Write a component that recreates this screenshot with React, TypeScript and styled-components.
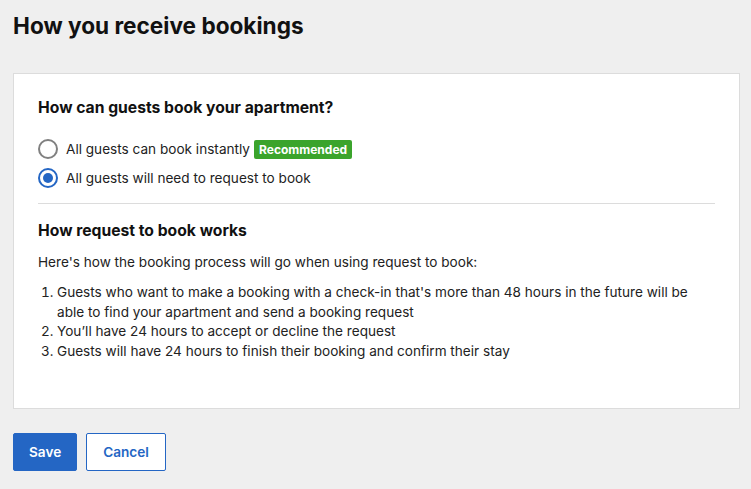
import styled, { createGlobalStyle } from "styled-components";

const GlobalStyle = createGlobalStyle`
  body {
    margin: 0;
    background-color: #efefef;
    font-family: Inter, "Liberation Sans", Arial, sans-serif;
    color: #1a1a1a;
  }
`;

const Page = styled.main`
  padding: 12px 11px 0 13px;
`;
const Title = styled.h1`
  margin: 0 0 33px;
  font-size: 22.6px;
  line-height: 28px;
  font-weight: 700;
  color: #111;
`;
const Card = styled.section`
  background-color: #fff;
  border: 1px solid #dcdcdc;
  padding: 24px 24px 46px;
`;
const Heading = styled.h2`
  margin: 0;
  font-size: 15.7px;
  line-height: 20px;
  font-weight: 700;
  color: #111;
`;
const Options = styled.div`
  display: flex;
  flex-direction: column;
  gap: 9px;
  margin-top: 21px;
  padding-bottom: 15px;
  border-bottom: 1px solid #dcdcdc;
`;
const Option = styled.label`
  display: flex;
  align-items: center;
  gap: 8px;
  height: 20px;
  font-size: 13.6px;
  color: #222;
`;
const Radio = styled.span<{ $checked?: boolean }>`
  box-sizing: border-box;
  width: 20px;
  height: 20px;
  border-radius: 50%;
  border: 2px solid ${(p) => (p.$checked ? "#2466c4" : "#808080")};
  display: flex;
  align-items: center;
  justify-content: center;

  &::after {
    content: "";
    display: ${(p) => (p.$checked ? "block" : "none")};
    width: 10px;
    height: 10px;
    border-radius: 50%;
    background-color: #2466c4;
  }
`;
const Badge = styled.span`
  margin-left: -4px;
  padding: 2px 5px;
  border-radius: 2px;
  background-color: #3ba42c;
  color: #fff;
  font-size: 12px;
  line-height: 15px;
  font-weight: 700;
`;
const Details = styled.div`
  padding-top: 17px;

  p {
    margin: 11px 0 0;
    font-size: 13.6px;
    line-height: 20px;
    color: #222;
  }
`;
const Steps = styled.ol`
  margin: 11px 0 0;
  padding-left: 19px;
  font-size: 13.6px;
  line-height: 19.7px;
  color: #222;
`;
const Actions = styled.div`
  display: flex;
  gap: 9px;
  margin-top: 24px;
`;
const Button = styled.button<{ $primary?: boolean }>`
  height: 38px;
  padding: 0 ${(p) => (p.$primary ? "15px" : "16px")};
  border-radius: 2px;
  border: 1px solid #2466c4;
  background-color: ${(p) => (p.$primary ? "#2466c4" : "#fff")};
  color: ${(p) => (p.$primary ? "#fff" : "#2466c4")};
  font-family: inherit;
  font-size: 13.6px;
  font-weight: 600;
  cursor: pointer;
`;

const steps = [
  "Guests who want to make a booking with a check-in that's more than 48 hours in the future will be able to find your apartment and send a booking request",
  "You’ll have 24 hours to accept or decline the request",
  "Guests will have 24 hours to finish their booking and confirm their stay",
];

const App = () => {
  return (
    <Page>
      <GlobalStyle />
      <Title>How you receive bookings</Title>
      <Card>
        <Heading>How can guests book your apartment?</Heading>
        <Options>
          <Option>
            <Radio />
            All guests can book instantly
            <Badge>Recommended</Badge>
          </Option>
          <Option>
            <Radio $checked />
            All guests will need to request to book
          </Option>
        </Options>
        <Details>
          <Heading>How request to book works</Heading>
          <p>Here's how the booking process will go when using request to book:</p>
          <Steps>
            {steps.map((step) => (
              <li key={step}>{step}</li>
            ))}
          </Steps>
        </Details>
      </Card>
      <Actions>
        <Button $primary>Save</Button>
        <Button>Cancel</Button>
      </Actions>
    </Page>
  );
};

export default App;
